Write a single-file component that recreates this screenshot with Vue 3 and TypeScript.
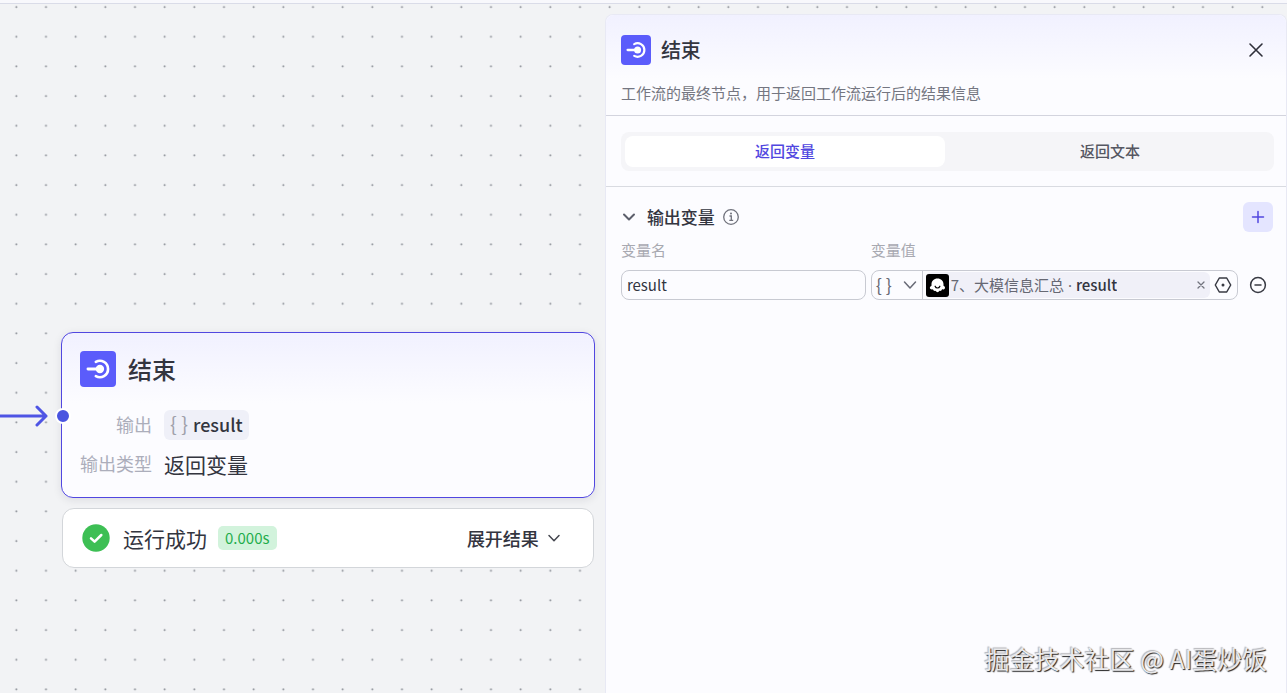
<script setup lang="ts">
import { ref } from 'vue'

const tabs = ['返回变量', '返回文本']
const activeTab = ref(tabs[0])
const variableName = ref('result')
const sectionOpen = ref(true)
</script>

<template>
  <div class="workspace">
    <header class="topbar"></header>
    <div class="stage">
      <svg class="dots" aria-hidden="true">
        <defs>
          <pattern id="grid" width="89" height="89" patternUnits="userSpaceOnUse" patternTransform="translate(1 -13) scale(.33333)">
            <circle cx="46" cy="48" r="3" fill="#8b8e96" />
          </pattern>
        </defs>
        <rect width="100%" height="100%" fill="url(#grid)" />
      </svg>

      <main class="canvas">
        <svg class="edge" width="52" height="24" viewBox="0 0 52 24" fill="none" stroke="#4e54e4" stroke-width="3" stroke-linecap="round" stroke-linejoin="round" aria-hidden="true">
          <path d="M-3 12H46M37 3L46 12L37 21" />
        </svg>
        <div class="node-group">
          <article class="node">
            <span class="port"></span>
            <div class="node-head">
              <span class="end-icon large">
                <svg viewBox="0 0 30 30" fill="none" stroke="#fff" aria-hidden="true">
                  <path d="M6.600 15H15" stroke-width="2.300" stroke-linecap="round" />
                  <circle cx="16.600" cy="15" r="3.500" fill="#fff" stroke="none" />
                  <path d="M13.200 9.100A6.800 6.800 0 1 1 13.200 20.900" stroke-width="2.200" stroke-linecap="round" />
                </svg>
              </span>
              <h2>结束</h2>
            </div>
            <dl>
              <dt>输出</dt>
              <dd><span class="chip"><span class="brace">{ }</span>result</span></dd>
              <dt>输出类型</dt>
              <dd>返回变量</dd>
            </dl>
          </article>
          <section class="run">
            <svg width="28" height="28" viewBox="0 0 28 28" aria-hidden="true">
              <circle cx="14" cy="14" r="13.700" fill="#3dbf54" />
              <path d="M9 14.300L12.600 17.700L19.300 11" fill="none" stroke="#fff" stroke-width="2.500" stroke-linecap="round" stroke-linejoin="round" />
            </svg>
            <span class="run-text">运行成功</span>
            <span class="time">0.000s</span>
            <button class="expand" type="button">
              展开结果
              <svg width="14" height="14" viewBox="0 0 14 14" fill="none" stroke="#44464f" stroke-width="1.500" stroke-linecap="round" stroke-linejoin="round" aria-hidden="true"><path d="M2 4.500L7 9.700L12 4.500" /></svg>
            </button>
          </section>
        </div>
      </main>

      <aside class="panel">
        <header class="panel-head">
          <div class="title-row">
            <span class="end-icon">
              <svg viewBox="0 0 30 30" fill="none" stroke="#fff" aria-hidden="true">
                <path d="M6.600 15H15" stroke-width="2.300" stroke-linecap="round" />
                <circle cx="16.600" cy="15" r="3.500" fill="#fff" stroke="none" />
                <path d="M13.200 9.100A6.800 6.800 0 1 1 13.200 20.900" stroke-width="2.200" stroke-linecap="round" />
              </svg>
            </span>
            <h1>结束</h1>
            <button class="icon-btn close" type="button" aria-label="关闭">
              <svg width="16" height="16" viewBox="0 0 16 16" stroke="#2f303a" stroke-width="1.600" stroke-linecap="round"><path d="M2 2L14 14M14 2L2 14" /></svg>
            </button>
          </div>
          <p>工作流的最终节点，用于返回工作流运行后的结果信息</p>
        </header>

        <div class="tab-wrap">
          <div class="tabs" role="tablist">
            <button v-for="tab in tabs" :key="tab" type="button" role="tab" :aria-selected="tab === activeTab" :class="{ active: tab === activeTab }" @click="activeTab = tab">{{ tab }}</button>
          </div>
        </div>

        <section class="outputs">
          <div class="section-head">
            <button class="toggle" type="button" :aria-expanded="sectionOpen" @click="sectionOpen = !sectionOpen">
              <svg width="16" height="16" viewBox="0 0 16 16" fill="none" stroke="#5c5f6b" stroke-width="2" stroke-linecap="round" stroke-linejoin="round" aria-hidden="true"><path d="M3 5.500L8 10.500L13 5.500" /></svg>
              <span>输出变量</span>
            </button>
            <svg width="18" height="18" viewBox="0 0 18 18" fill="none" stroke="#70727c" stroke-width="1.300" aria-hidden="true">
              <circle cx="9" cy="9" r="7.300" />
              <path d="M7.500 8H9.300V12.300M7.300 12.300H11.200" />
              <circle cx="9" cy="5.500" r="1" fill="#70727c" stroke="none" />
            </svg>
            <button class="add" type="button" aria-label="添加">
              <svg width="14" height="14" viewBox="0 0 14 14" stroke="#5147e0" stroke-width="1.500" stroke-linecap="round"><path d="M7 1.500V12.500M1.500 7H12.500" /></svg>
            </button>
          </div>
          <div v-if="sectionOpen" class="fields">
            <label for="variable-name">变量名</label>
            <span class="label">变量值</span>
            <input id="variable-name" v-model="variableName" type="text" />
            <div class="value">
              <button class="type" type="button" aria-label="类型">
                <span>{ }</span>
                <svg width="16" height="16" viewBox="0 0 16 16" fill="none" stroke="#686a76" stroke-width="1.500" stroke-linecap="round" stroke-linejoin="round" aria-hidden="true"><path d="M2.500 5L8 11L13.500 5" /></svg>
              </button>
              <div class="reference">
                <svg width="23" height="23" viewBox="0 0 23 23" aria-hidden="true">
                  <rect width="23" height="23" rx="3" fill="#000" />
                  <path d="M11.500 4.500C7.900 4.500 5.500 7 5.500 10.300V11.700C3.800 12.400 3.300 14.200 4.500 15.100C5.300 15.700 6.200 15.500 7 15.300C7.300 17 8.700 17.200 9.500 16.800C10.700 18.600 12.400 18.600 13.500 16.800C14.600 17.200 15.700 16.900 16 15.300C17 15.500 18.200 15.600 18.800 14.500C19.400 13.300 18.800 12.200 17.500 11.700V10.300C17.500 7 15.100 4.500 11.500 4.500Z" fill="#fff" />
                  <path d="M9.100 12.200C10 14.600 13 14.600 13.900 12.200" fill="none" stroke="#000" stroke-width="1.200" stroke-linecap="round" />
                </svg>
                <span class="source">7、大模信息汇总<span class="separator"> · </span><b>result</b></span>
                <button class="icon-btn clear" type="button" aria-label="清除">
                  <svg width="10" height="10" viewBox="0 0 10 10" stroke="#72747e" stroke-width="1.300" stroke-linecap="round"><path d="M2 2L8 8M8 2L2 8" /></svg>
                </button>
              </div>
              <button class="icon-btn" type="button" aria-label="选择引用">
                <svg width="18" height="18" viewBox="0 0 18 18" fill="none" stroke="#383a43" stroke-width="1.500" stroke-linejoin="round"><path d="M5.300 2H12.700L16.700 9L12.700 16H5.300L1.300 9Z" /><circle cx="9" cy="9" r="1.500" fill="#383a43" stroke="none" /></svg>
              </button>
            </div>
            <button class="icon-btn" type="button" aria-label="删除">
              <svg width="18" height="18" viewBox="0 0 18 18" fill="none" stroke="#383a43" stroke-width="1.500" stroke-linecap="round"><circle cx="9" cy="9" r="7.400" /><path d="M6 9H12" /></svg>
            </button>
          </div>
        </section>
      </aside>
    </div>
    <div class="watermark">掘金技术社区 @ AI蛋炒饭</div>
  </div>
</template>

<style>
body {
  margin: 0;
}
</style>

<style scoped>
* {
  box-sizing: border-box;
}
.workspace {
  position: relative;
  display: flex;
  flex-direction: column;
  min-height: 100vh;
  overflow: hidden;
  background: #f2f3f5;
  color: #33353f;
  font-family: "Noto Sans CJK SC", sans-serif;
  font-size: 15px;
  line-height: 20px;
}
button,
input {
  padding: 0;
  border: 0;
  background: none;
  color: inherit;
  font: inherit;
}
button {
  cursor: pointer;
}
svg {
  display: block;
  flex: none;
}
h1,
h2,
p,
dl,
dd {
  margin: 0;
}
.topbar {
  height: 4px;
  border-bottom: 1px solid #dadce8;
  background: #f8f8fc;
}
.stage {
  position: relative;
  flex: 1;
  display: grid;
  grid-template-columns: 47% 1fr;
  padding-top: 10px;
}
.dots {
  position: absolute;
  inset: 0;
  width: 100%;
  height: 100%;
}
.canvas {
  position: relative;
}
.edge {
  position: absolute;
  left: 0;
  top: 390px;
}
.node-group {
  position: absolute;
  left: 61px;
  right: 10px;
  top: 318px;
}
.node {
  position: relative;
  padding: 18px;
  border: 1px solid #5147e0;
  border-radius: 12px;
  background: linear-gradient(#f1f1ff, #fcfcff 70px);
  box-shadow: 0 2px 8px rgba(30, 34, 50, 0.1);
}
.port {
  position: absolute;
  left: -7px;
  top: 75px;
  width: 16px;
  height: 16px;
  border: 2px solid #fff;
  border-radius: 50%;
  background: #4954e0;
}
.node-head {
  display: flex;
  align-items: center;
  gap: 12px;
  height: 36px;
}
.end-icon {
  flex: none;
  width: 30px;
  height: 30px;
  border-radius: 4px;
  background: #5b5cfb;
}
.large {
  width: 36px;
  height: 36px;
}
h2 {
  font-size: 24px;
  font-weight: 500;
  line-height: 36px;
}
dl {
  display: grid;
  grid-template-columns: 72px 1fr;
  column-gap: 12px;
  row-gap: 9px;
  margin-top: 23px;
  line-height: 30px;
}
dt {
  color: #acaebb;
  font-size: 18px;
  line-height: 28px;
  text-align: right;
}
dd {
  font-size: 21px;
}
.chip {
  display: inline-flex;
  gap: 5px;
  height: 30px;
  padding: 0 6px;
  border-radius: 6px;
  background: #eff0f8;
  font-size: 18px;
  font-weight: 500;
  line-height: 28px;
  vertical-align: top;
}
.brace {
  color: #a0a1ab;
  font-size: 20px;
  font-weight: 400;
}
.run {
  display: flex;
  align-items: center;
  height: 60px;
  margin: 10px 1px 0;
  padding: 0 32px 0 19px;
  border: 1px solid #d3d6da;
  border-radius: 12px;
  background: #fff;
}
.run-text {
  margin: 0 11px 0 13px;
  font-size: 21px;
}
.time {
  padding: 0 7px;
  border-radius: 5px;
  background: #d2f3dc;
  color: #1fad4c;
  font-size: 15px;
  line-height: 24px;
}
.expand {
  display: flex;
  align-items: center;
  gap: 8px;
  margin-left: auto;
  font-size: 18px;
  font-weight: 500;
}
.panel {
  position: relative;
  border: 1px solid #e8e9f4;
  border-bottom: 0;
  border-radius: 8px 8px 0 0;
  background: #fcfcff;
}
.panel-head {
  padding: 20px 15px 12px;
  border-bottom: 1px solid #d3d4de;
  border-radius: 8px 8px 0 0;
  background: linear-gradient(#f1f1ff, #fcfcff 64px);
}
.title-row {
  display: flex;
  align-items: center;
  gap: 10px;
  height: 30px;
}
h1 {
  font-size: 20px;
  font-weight: 500;
  line-height: 30px;
}
.icon-btn {
  display: grid;
  place-items: center;
}
.close {
  width: 30px;
  height: 30px;
  margin-left: auto;
}
.panel-head p {
  margin-top: 18px;
  color: #747681;
}
.tab-wrap {
  padding: 16px 12px 15px 15px;
  border-bottom: 1px solid #d9dbe1;
}
.tabs {
  display: grid;
  grid-template-columns: 1fr 1fr;
  gap: 5px;
  padding: 4px;
  border-radius: 8px;
  background: #f5f5f8;
}
.tabs button {
  height: 31px;
  padding-bottom: 2px;
  border-radius: 8px;
  font-weight: 500;
  color: #555762;
}
.tabs .active {
  background: #fff;
  color: #5147e0;
}
.outputs {
  padding: 15px 13px 0 15px;
}
.section-head {
  display: flex;
  align-items: center;
  gap: 7px;
  height: 29px;
}
.toggle {
  display: flex;
  align-items: center;
  gap: 10px;
  font-size: 17px;
  font-weight: 500;
}
.add {
  display: grid;
  place-items: center;
  width: 30px;
  height: 30px;
  margin-left: auto;
  border-radius: 6px;
  background: #e4e5ff;
}
.fields {
  display: grid;
  grid-template-columns: 2fr 3fr 30px;
  column-gap: 5px;
  row-gap: 10px;
  margin-top: 9px;
}
label,
.label {
  color: #a8a9b1;
}
.label {
  grid-column: 2 / 4;
}
input,
.value {
  width: 100%;
  min-width: 0;
  height: 30px;
  border: 1px solid #c8cad2;
  border-radius: 8px;
}
input {
  padding: 0 5px 2px;
}
.value {
  display: flex;
  align-items: center;
  padding-right: 5px;
}
.type {
  display: flex;
  align-items: center;
  justify-content: space-between;
  width: 51px;
  height: 28px;
  padding: 0 4px;
  border-right: 1px solid #c8cad2;
  color: #686a76;
  font-size: 18px;
  line-height: 18px;
}
.type span {
  padding-bottom: 2px;
}
.reference {
  flex: 1;
  display: flex;
  align-items: center;
  gap: 2px;
  min-width: 0;
  height: 26px;
  margin: 0 4px 0 3px;
  padding-right: 4px;
  border-radius: 6px;
  background: #f0f0f8;
  color: #666873;
}
.source {
  overflow: hidden;
  text-overflow: ellipsis;
  white-space: nowrap;
}
.separator {
  font-family: "Noto Sans", sans-serif;
}
b {
  color: #33353f;
  font-weight: 500;
}
.clear {
  margin-left: auto;
}
.watermark {
  position: absolute;
  right: 20px;
  bottom: 19px;
  color: #e9e9eb;
  font-size: 25px;
  line-height: 32px;
  text-shadow: 1px 1px 1px #222, -1px -1px 1px #b5b5b9;
}
</style>
